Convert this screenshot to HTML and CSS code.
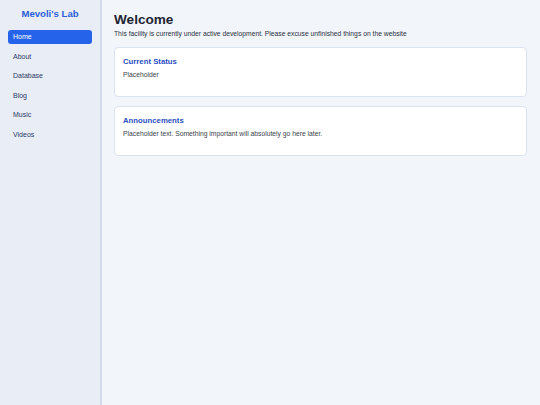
FILE: index.html
```html
<!DOCTYPE html>
<html>
<head>
<meta charset="utf-8">
<link rel="stylesheet" href="styles.css">
</head>
<body>
<div class="layout">
  <aside class="sidebar">
    <div class="brand">Mevoli's Lab</div>
    <nav class="nav">
      <a class="nav-item active">Home</a>
      <a class="nav-item">About</a>
      <a class="nav-item">Database</a>
      <a class="nav-item">Blog</a>
      <a class="nav-item">Music</a>
      <a class="nav-item">Videos</a>
    </nav>
  </aside>
  <main class="main">
    <h1 class="title">Welcome</h1>
    <p class="subtitle">This facility is currently under active development. Please excuse unfinished things on the website</p>
    <section class="card">
      <h2 class="card-title">Current Status</h2>
      <p class="card-text">Placeholder</p>
    </section>
    <section class="card">
      <h2 class="card-title">Announcements</h2>
      <p class="card-text">Placeholder text. Something important will absolutely go here later.</p>
    </section>
  </main>
</div>
</body>
</html>
```

FILE: styles.css
```css
html, body {
  margin: 0;
  padding: 0;
  height: 100%;
}
body {
  font-family: "Liberation Sans", Arial, sans-serif;
  background: #f2f5fa;
  color: #1f2533;
}
.layout {
  display: flex;
  height: 405px;
}
.sidebar {
  box-sizing: border-box;
  width: 102px;
  flex-shrink: 0;
  background: #e8edf6;
  border-right: 2px solid #d3dbe8;
  padding: 7px 8px;
}
.brand {
  text-align: center;
  color: #2b5fd9;
  font-weight: bold;
  font-size: 9.6px;
  line-height: 14px;
  margin-bottom: 9px;
}
.nav {
  display: flex;
  flex-direction: column;
  gap: 5.5px;
}
.nav-item {
  display: block;
  font-size: 7px;
  line-height: 14px;
  padding: 0 5px;
  color: #2c3a66;
  border-radius: 3px;
}
.nav-item.active {
  background: #2563eb;
  color: #ffffff;
}
.main {
  flex: 1;
  padding: 11px 13px 0 12px;
}
.title {
  margin: 0;
  font-size: 13.6px;
  line-height: 18px;
  font-weight: bold;
  color: #1e2433;
}
.subtitle {
  margin: 0 0 9px;
  font-size: 6.75px;
  line-height: 9px;
  color: #2a3140;
}
.card {
  background: #ffffff;
  border: 1px solid #dbe2f0;
  border-radius: 4px;
  padding: 8px 8px 0;
  height: 50px;
  box-sizing: border-box;
  margin-bottom: 9px;
}
.card-title {
  margin: 0;
  font-size: 7.75px;
  line-height: 11px;
  font-weight: bold;
  color: #2a4fc2;
}
.card-text {
  margin: 3px 0 0;
  font-size: 6.75px;
  line-height: 9px;
  color: #3a3f4a;
}
```
